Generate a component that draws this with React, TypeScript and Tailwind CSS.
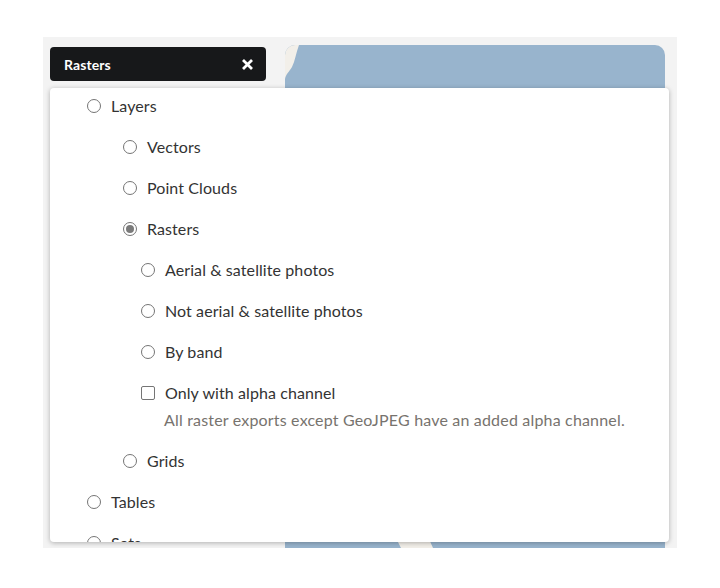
const fontStack = { fontFamily: 'Lato, "Noto Sans", sans-serif' };

function Radio({ checked = false }: { checked?: boolean }) {
  return (
    <span className="flex h-[14px] w-[14px] shrink-0 items-center justify-center rounded-full border border-[#757575] bg-white">
      {checked && <span className="h-[8px] w-[8px] rounded-full bg-[#7a7a7a]" />}
    </span>
  );
}

function Row({ label, checked }: { label: string; checked?: boolean }) {
  return (
    <label className="flex h-[20px] items-center gap-[10px] text-[16px] leading-[20px] tracking-[0.09px] text-[#333333]">
      <Radio checked={checked} />
      <span>{label}</span>
    </label>
  );
}

function MapBackdrop() {
  return (
    <div className="relative h-[503px] w-[380px] overflow-hidden rounded-t-[10px] bg-[#98b4cd]">
      <svg className="absolute left-0 top-0" width="380" height="503" viewBox="0 0 380 503">
        <path d="M0 0H14C11 8 10 16 7 22C4 27 1 29 0 34Z" fill="#f2efe9" />
        <path d="M110 491L116 503H148L144 494L141 497L136 491Z" fill="#f2efe9" />
      </svg>
    </div>
  );
}

export default function App() {
  return (
    <div className="h-[588px] w-[720px] bg-white pl-[43px] pt-[37px]" style={fontStack}>
      <div className="relative h-[511px] w-[634px] overflow-hidden bg-[#f3f3f3]">
        <div className="flex items-start pl-[7px] pt-[8px]">
          <button className="mt-[2px] flex h-[34px] w-[216px] items-center justify-between rounded-[4px] bg-[#17181a] pl-[14px] pr-[13px] text-[14px] font-bold tracking-[0.1px] text-white">
            <span>Rasters</span>
            <svg width="11" height="11" viewBox="0 0 11 11" fill="none" stroke="white" strokeWidth="2.8">
              <path d="M1 1L10 10M10 1L1 10" />
            </svg>
          </button>
          <div className="ml-[19px]">
            <MapBackdrop />
          </div>
        </div>

        {/* Dropdown panel */}
        <div className="absolute left-[7px] top-[51px] h-[454px] w-[619px] overflow-hidden rounded-[4px] bg-white pl-[37px] pt-[8px] shadow-[0_1px_5px_rgba(0,0,0,0.28)]">
          <div className="flex flex-col gap-[21px]">
            <Row label="Layers" />
            <div className="flex flex-col gap-[21px] pl-[36px]">
              <Row label="Vectors" />
              <Row label="Point Clouds" />
              <Row label="Rasters" checked />
              <div className="flex flex-col gap-[21px] pl-[18px]">
                <Row label="Aerial & satellite photos" />
                <Row label="Not aerial & satellite photos" />
                <Row label="By band" />
                <div className="flex flex-col gap-[7px]">
                  <label className="flex h-[20px] items-center gap-[10px] text-[16px] leading-[20px] tracking-[0.09px] text-[#333333]">
                    <span className="h-[14px] w-[14px] shrink-0 rounded-[2px] border border-[#757575] bg-white" />
                    <span>Only with alpha channel</span>
                  </label>
                  <p className="pl-[23px] text-[16px] leading-[20px] tracking-[0.18px] text-[#77736e]">
                    All raster exports except GeoJPEG have an added alpha channel.
                  </p>
                </div>
              </div>
              <Row label="Grids" />
            </div>
            <Row label="Tables" />
            <Row label="Sets" />
          </div>
        </div>
      </div>
    </div>
  );
}
